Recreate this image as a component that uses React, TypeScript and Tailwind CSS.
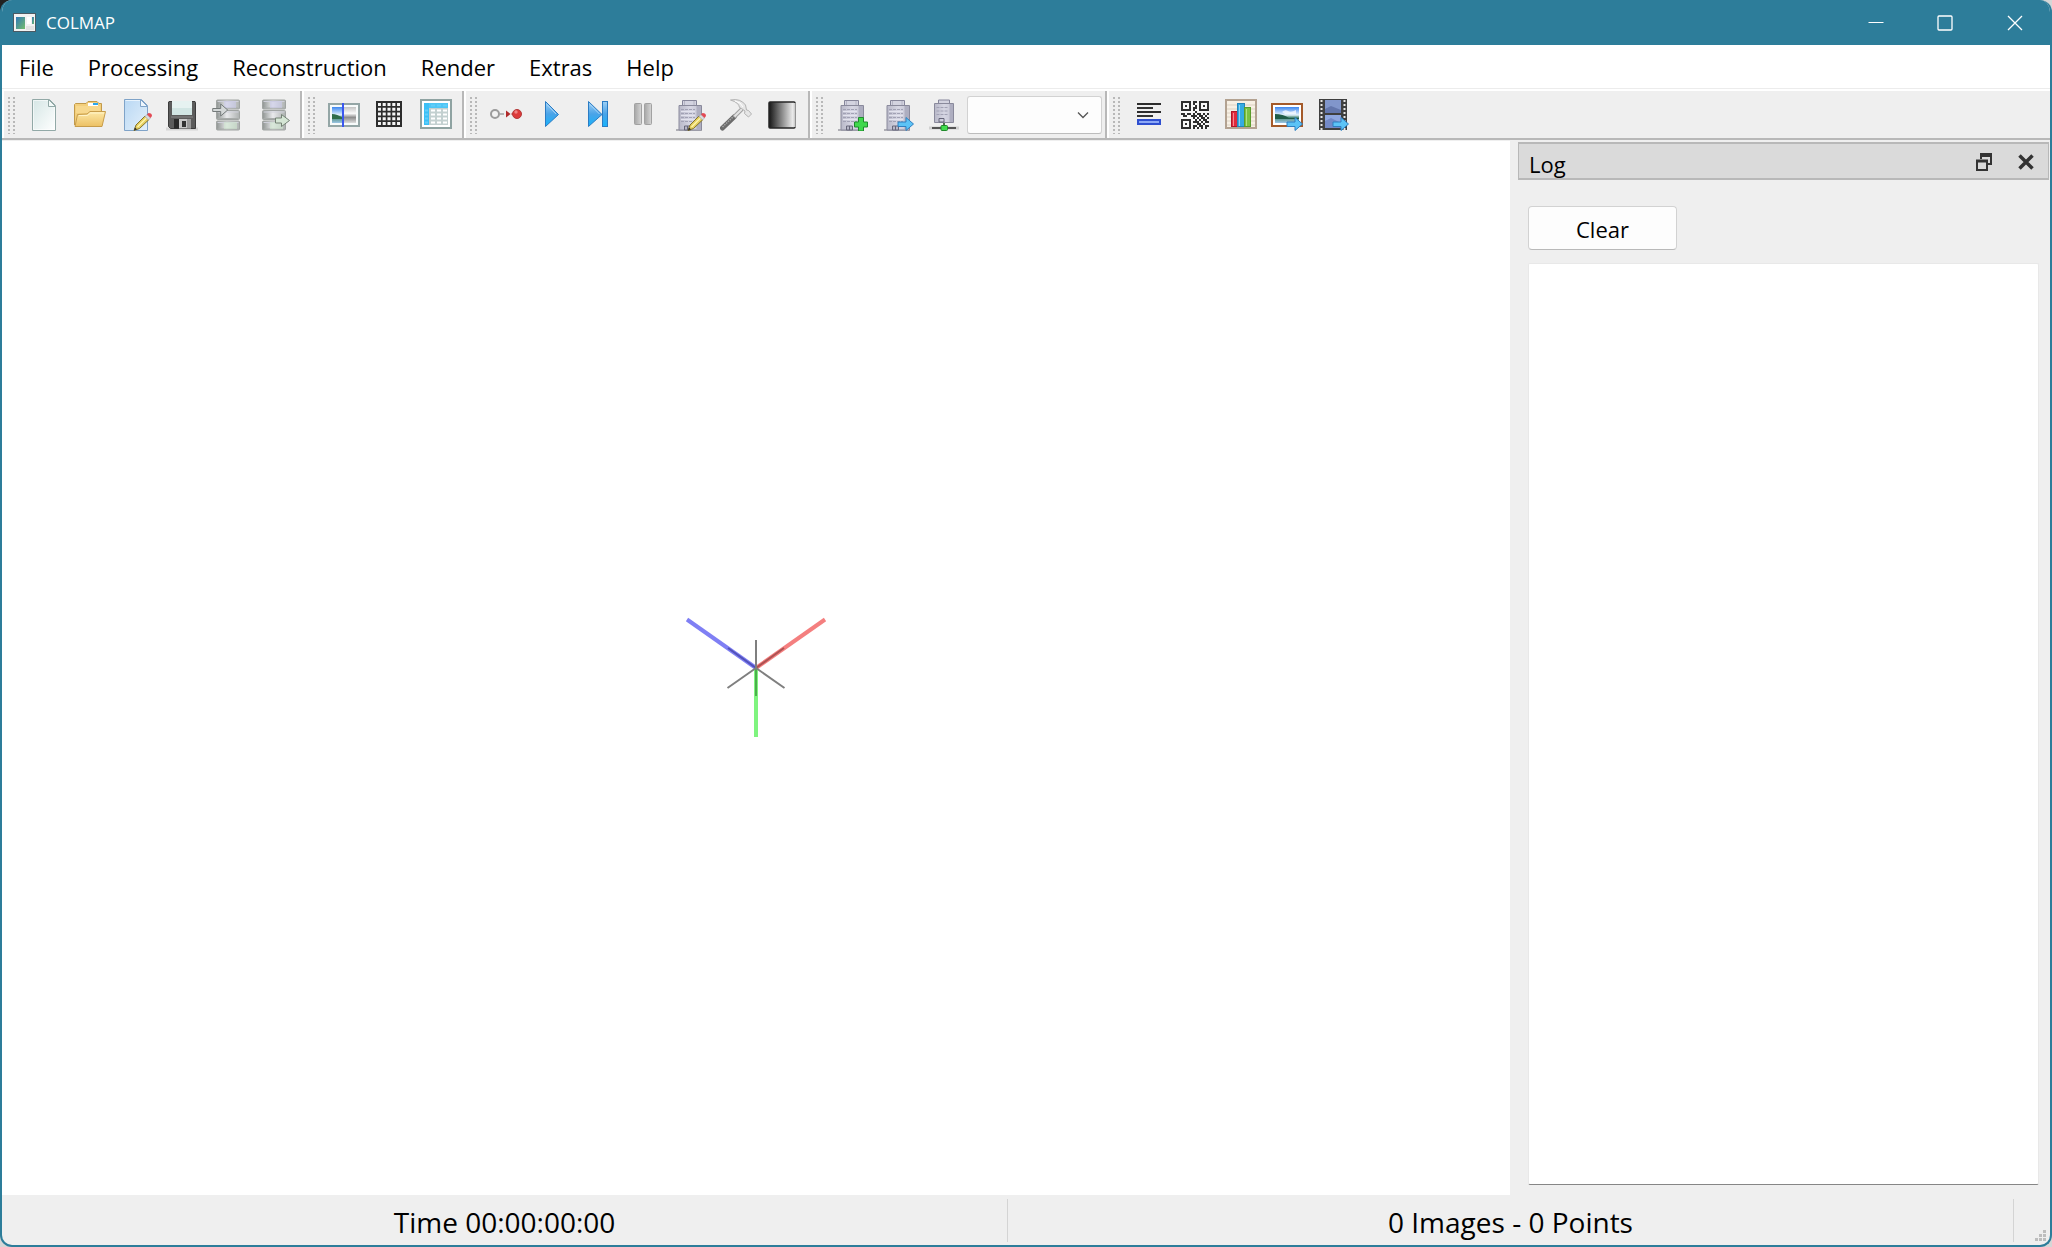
import React, { useState } from 'react';

const Gradients = () => (
  <svg className="absolute h-0 w-0" aria-hidden="true">
    <defs>
      <linearGradient id="page" x1="0" y1="0" x2="1" y2="1">
        <stop offset="0" stopColor="#d5e6e5" />
        <stop offset="1" stopColor="#ffffff" />
      </linearGradient>
      <linearGradient id="bluePage" x1="0" y1="0" x2="1" y2="1">
        <stop offset="0" stopColor="#b9d8f4" />
        <stop offset="1" stopColor="#e4f0fa" />
      </linearGradient>
      <linearGradient id="folder" x1="0" y1="0" x2="0" y2="1">
        <stop offset="0" stopColor="#fde9a9" />
        <stop offset="1" stopColor="#ecc063" />
      </linearGradient>
      <linearGradient id="disk" x1="0" y1="0" x2="1" y2="0">
        <stop offset="0" stopColor="#8f9492" />
        <stop offset="0.45" stopColor="#e9eaec" />
        <stop offset="1" stopColor="#adb1b0" />
      </linearGradient>
      <linearGradient id="play" x1="0" y1="0" x2="0" y2="1">
        <stop offset="0" stopColor="#9fd0f5" />
        <stop offset="0.5" stopColor="#4aa3e8" />
        <stop offset="1" stopColor="#16b3fb" />
      </linearGradient>
      <linearGradient id="sky" x1="0" y1="0" x2="0" y2="1">
        <stop offset="0" stopColor="#3b86f0" />
        <stop offset="0.5" stopColor="#e6f3fb" />
        <stop offset="0.65" stopColor="#4c8a78" />
        <stop offset="1" stopColor="#9cc6e6" />
      </linearGradient>
      <linearGradient id="graySky" x1="0" y1="0" x2="0" y2="1">
        <stop offset="0" stopColor="#c4c4c4" />
        <stop offset="0.4" stopColor="#fafafa" />
        <stop offset="0.65" stopColor="#8d8d8d" />
        <stop offset="1" stopColor="#dddddd" />
      </linearGradient>
      <linearGradient id="blackWhite" x1="0" y1="0" x2="1" y2="0">
        <stop offset="0" stopColor="#161616" />
        <stop offset="1" stopColor="#ffffff" />
      </linearGradient>
      <linearGradient id="wall" x1="0" y1="0" x2="1" y2="0">
        <stop offset="0" stopColor="#b8b8c8" />
        <stop offset="0.5" stopColor="#d6d6e3" />
        <stop offset="1" stopColor="#c3c3d2" />
      </linearGradient>
      <linearGradient id="pauseBar" x1="0" y1="0" x2="1" y2="0">
        <stop offset="0" stopColor="#a6a6a6" />
        <stop offset="1" stopColor="#d6d6d6" />
      </linearGradient>
      <linearGradient id="shot" x1="0" y1="0" x2="1" y2="1">
        <stop offset="0" stopColor="#2f78b8" />
        <stop offset="1" stopColor="#74bd6b" />
      </linearGradient>
    </defs>
  </svg>
);

const Icon = ({ children }: { children: React.ReactNode }) => (
  <svg viewBox="0 0 32 32" className="h-8 w-8" fill="none" aria-hidden="true">
    {children}
  </svg>
);

const Pencil = () => (
  <g>
    <path d="M14 31.5l2-5.5L25 17l4 3.500-9.500 9z" fill="#e6d060" stroke="#83722b" strokeWidth="1" />
    <path d="M17.500 28L26.500 19" stroke="#fff6b0" strokeWidth="1.200" />
    <path d="M25 17.500l2-2 3.500 3.500-2 2z" fill="#d9dde0" stroke="#9a9fa2" strokeWidth="0.600" />
    <path d="M27 15.500l1.500-1.500q3.500 0 3.500 3l-1.500 2z" fill="#e34a55" />
    <path d="M14 31.500l1-3 2 1.800z" fill="#2a2a2a" />
  </g>
);

const BlueArrow = () => (
  <path
    d="M16 23h8v-4.500l7.500 6.500-7.500 6.500V27.500h-8z"
    fill="#5cc3f6"
    stroke="#2f7fc0"
    strokeWidth="1"
    strokeLinejoin="round"
  />
);

const Building = () => (
  <g>
    <path d="M2 31h26" stroke="#9a9aa2" strokeWidth="1.500" />
    <path d="M8.500 7V1.500h14V7" fill="#d3d3e0" stroke="#85859a" />
    <path d="M10.500 2v5M20 2v5" stroke="#b4b4c4" />
    <path d="M5 31V6.500h22.500V31z" fill="url(#wall)" stroke="#8a8a9c" />
    <path d="M22.500 7v24H27V7z" fill="#aeaec0" />
    <path d="M7 10.500h14M7 14.500h14M7 18.500h14M7 22.500h14" stroke="#a2a2b5" strokeDasharray="3 1" />
    <path d="M7 12.500h14M7 16.500h14M7 20.500h14" stroke="#e3e3ee" />
    <path d="M10.500 31v-4h6v4z" fill="#b8b8c8" stroke="#66667a" />
    <path d="M13.500 27v4" stroke="#66667a" />
  </g>
);

const Disks = () => (
  <g>
    {[1, 11.5, 22].map((y) => (
      <g key={y}>
        <rect x="4.500" y={y} width="23" height="9" rx="1" fill="url(#disk)" stroke="#a0a4a2" />
        <path d={`M5.500 ${y + 1.500}h21`} stroke="#cfd0da" />
        <path d={`M5.500 ${y + 8}h21`} stroke="#a8acaa" />
      </g>
    ))}
    <rect x="12" y="2" width="12" height="7" fill="#cacaea" opacity="0.6" />
    <rect x="12" y="23" width="13" height="7" fill="#cfe6cf" opacity="0.6" />
  </g>
);

const NewIcon = () => (
  <Icon>
    <path d="M4.500.5h17l6 6v25h-23z" fill="url(#page)" stroke="#92a9a7" />
    <path d="M5.500 1.500h15l6 6v23h-21z" stroke="#ffffff" opacity="0.6" />
    <path d="M20.500.5v7h7z" fill="#f4faf9" stroke="#92a9a7" />
  </Icon>
);

const OpenIcon = () => (
  <Icon>
    <path d="M.5 26V5.500l1-1H12l2-2h9l2 2h2.500V13" fill="#f3cf7c" stroke="#c29a4b" />
    <path d="M14 4h10v3.500H14z" fill="#ffffff" />
    <path d="M19 4h5v2h-5z" fill="#2aa7ee" />
    <path d="M2 7h24v7H2z" fill="#f7d88e" />
    <path d="M1 27.500L3.500 15.500l9.500-.5 3-2.500h15.500l-3.500 15z" fill="url(#folder)" stroke="#c79c4a" strokeLinejoin="round" />
    <path d="M5 16.500h8.500l3-2.500H30" stroke="#fff3c8" />
  </Icon>
);

const EditIcon = () => (
  <Icon>
    <path d="M4.500.5h17l6 6v25h-23z" fill="url(#bluePage)" stroke="#7fa3c8" />
    <path d="M5.500 1.500h15" stroke="#e9f4fd" />
    <path d="M20.500.5v7h7z" fill="#eef6fd" stroke="#7fa3c8" />
    <Pencil />
  </Icon>
);

const SaveIcon = () => (
  <Icon>
    <path d="M0 30h32" stroke="#d6d6d6" strokeWidth="3" />
    <path d="M3 2.500h26l.5 1v26H4.500l-2-2V3z" fill="#5c5c5c" stroke="#3c3c3c" />
    <path d="M6 2h20v14H6z" fill="#e6f2f1" />
    <path d="M6 9h20v7H6z" fill="#d2e6e4" />
    <path d="M5 18h22" stroke="#888888" />
    <path d="M8 20h17v9.500H8z" fill="#2a2a2a" />
    <path d="M13 20h12v9.500H13z" fill="#c8c8c8" />
    <path d="M16 22h4v6h-4z" fill="#333333" />
    <path d="M21 20h4v9h-4z" fill="#9b9b9b" />
  </Icon>
);

const ImportIcon = () => (
  <Icon>
    <Disks />
    <path d="M.7 9.500h8V5l7 6-7 6v-4.500h-8z" fill="#d4d8d8" stroke="#747a7a" />
  </Icon>
);

const ExportIcon = () => (
  <Icon>
    <Disks />
    <path d="M17.500 19h6v-3.500l8 6-8 6V24h-6z" fill="#d5e6d5" stroke="#748275" />
  </Icon>
);

const MatchIcon = () => (
  <Icon>
    <rect x="1" y="5" width="30" height="22" fill="#f7fbfb" stroke="#94a6a6" strokeWidth="2" />
    <rect x="4" y="8" width="11" height="16" fill="url(#sky)" />
    <path d="M4 15q5 0 11 4v1H4z" fill="#2f6d4b" />
    <rect x="16" y="8" width="12" height="16" fill="url(#graySky)" />
    <path d="M15 4v24" stroke="#3b57ee" strokeWidth="2" />
  </Icon>
);

const GridIcon = () => (
  <Icon>
    <rect x="3" y="3" width="24" height="24" fill="#f6f6f6" stroke="#2d2d2d" strokeWidth="2" />
    <path
      d="M7.800 3v24M12.600 3v24M17.400 3v24M22.200 3v24M3 7.800h24M3 12.600h24M3 17.400h24M3 22.200h24"
      stroke="#2d2d2d"
      strokeWidth="1.700"
    />
  </Icon>
);

const TableIcon = () => (
  <Icon>
    <rect x="1" y="1" width="30" height="28" fill="#ffffff" stroke="#8fa3a2" strokeWidth="2" />
    <rect x="4" y="4" width="24" height="22" fill="#c3d0d0" />
    <path d="M4 4h24v5H4z" fill="#4fc6f5" />
    <path d="M4 4h5v22H4z" fill="#3bc0f6" />
    <path
      d="M11 11.500h4M17 11.500h4M23 11.500h4M11 15.500h4M17 15.500h4M23 15.500h4M11 19.500h4M17 19.500h4M23 19.500h4M11 23.500h4M17 23.500h4M23 23.500h4"
      stroke="#ffffff"
      strokeWidth="2"
    />
    <path d="M11 6.500h4M17 6.500h4M23 6.500h4M5 11.500h3M5 15.500h3M5 19.500h3M5 23.500h3" stroke="#62cefa" strokeWidth="2" />
  </Icon>
);

const RecordIcon = () => (
  <Icon>
    <circle cx="5" cy="15" r="4" fill="#f2f2f2" stroke="#9b9b9b" strokeWidth="2" />
    <path d="M10 15h4" stroke="#b5b5b5" strokeWidth="2" />
    <path d="M16 11.500l4.500 3.500-4.500 3.500z" fill="#b02a2a" />
    <path d="M21 15h2" stroke="#e0a0a0" strokeWidth="2" />
    <circle cx="27" cy="15" r="4.500" fill="#dd3b3b" stroke="#b23a3a" />
    <circle cx="26" cy="13" r="1.700" fill="#f08484" />
  </Icon>
);

const PlayIcon = () => (
  <Icon>
    <path d="M9.500 2.500l13 13-13 12z" fill="url(#play)" stroke="#2b7cc4" />
    <path d="M11 5.500l9 9.500" stroke="#c6e4fb" opacity="0.7" />
  </Icon>
);

const NextIcon = () => (
  <Icon>
    <path d="M6.500 2.500l13.500 13-13.500 12z" fill="url(#play)" stroke="#2b7cc4" />
    <path d="M8 5.500l9.500 9.500" stroke="#c6e4fb" opacity="0.7" />
    <rect x="20.500" y="2.500" width="5" height="25" fill="url(#play)" stroke="#2b7cc4" />
  </Icon>
);

const PauseIcon = () => (
  <Icon>
    <rect x="6.500" y="4.500" width="7" height="21" rx="1" fill="url(#pauseBar)" stroke="#a2a2a2" />
    <rect x="16.500" y="4.500" width="7" height="21" rx="1" fill="url(#pauseBar)" stroke="#a2a2a2" />
  </Icon>
);

const BuildingEditIcon = () => (
  <Icon>
    <Building />
    <Pencil />
  </Icon>
);

const HammerIcon = () => (
  <Icon>
    <path d="M2.500 29L14 18" stroke="#6c6c6c" strokeWidth="5" strokeLinecap="round" />
    <path d="M2.500 28L14 17" stroke="#a5a5a5" strokeWidth="1.500" strokeDasharray="1.500 1" />
    <path d="M14 18L22 10" stroke="#a0a0a0" strokeWidth="4" />
    <path d="M14.500 17.500L22 10" stroke="#e4e4e4" strokeWidth="2" />
    <path
      d="M10.500 1q10-2 15 5l1 5 2 .5 3 3.500-3 3-4-3.500.5-2.500-3.500-2.500-2-1q-.5-5-9-7.500z"
      fill="#e6e6e6"
      stroke="#b2b2b2"
    />
    <path d="M15 2q6 1 8 6" stroke="#ffffff" />
  </Icon>
);

const GradientIcon = () => (
  <Icon>
    <rect x="3" y="3" width="26" height="26" rx="1" fill="url(#blackWhite)" stroke="#262626" strokeWidth="1.500" />
    <path d="M28.500 4v24" stroke="#cfcfcf" strokeWidth="2" />
  </Icon>
);

const BuildingAddIcon = () => (
  <Icon>
    <Building />
    <path
      d="M22.500 18.500h5v4.500h4v5h-4v4h-5v-4h-4v-5h4z"
      fill="#3fd84c"
      stroke="#1f8a2c"
      strokeLinejoin="round"
    />
  </Icon>
);

const BuildingNextIcon = () => (
  <Icon>
    <Building />
    <BlueArrow />
  </Icon>
);

const BuildingNetIcon = () => (
  <Icon>
    <path d="M10.500 5V1h11v4" fill="#d3d3e0" stroke="#85859a" />
    <path d="M6.500 23.500V4.500h19v19z" fill="url(#wall)" stroke="#8a8a9c" />
    <path d="M21.500 5v18h3.500V5z" fill="#aeaec0" />
    <path d="M8.500 8.500h12M8.500 12h12M8.500 15.500h12" stroke="#a2a2b5" strokeDasharray="3 1" />
    <path d="M11 23v-3.500h5V23z" stroke="#66667a" />
    <path d="M16 24v4" stroke="#4f6f4f" strokeWidth="2" />
    <path d="M1 29h30" stroke="#8b8b8b" strokeWidth="3" opacity="0.3" />
    <path d="M4 29h24" stroke="#2b2b2b" strokeWidth="1.500" />
    <rect x="13" y="26.500" width="6.500" height="5" rx="1" fill="#40dc4d" stroke="#208a2b" />
  </Icon>
);

const LogIcon = () => (
  <Icon>
    <path d="M4 5h24M4 13h24" stroke="#2c2c2c" strokeWidth="2" />
    <path d="M4 9h16M4 17h16" stroke="#333333" strokeWidth="2" />
    <rect x="5" y="21" width="22" height="4" fill="#8ca8f6" stroke="#2f4fd0" strokeWidth="2" />
  </Icon>
);

// 14 x 14 modules, two pixels each
const qrRows = [
  '11111011011111',
  '10001010010001',
  '10101001010101',
  '10001011010001',
  '11111010011111',
  '00000001000000',
  '11011010110101',
  '01100111011010',
  '00000010101101',
  '11111001010110',
  '10001011101011',
  '10101000110100',
  '10001011011011',
  '11111010101010',
];

const QrIcon = () => (
  <Icon>
    <rect x="2" y="2" width="28" height="28" fill="#f7f7f7" />
    {qrRows.map((row, y) =>
      row.split('').map((cell, x) =>
        cell === '1' ? <rect key={`${x}-${y}`} x={2 + x * 2} y={2 + y * 2} width="2" height="2" fill="#2e2e2e" /> : null
      )
    )}
  </Icon>
);

const ChartIcon = () => (
  <Icon>
    <rect x="1" y="1" width="30" height="28" fill="#f7f0e4" stroke="#b3a291" strokeWidth="2" />
    <path d="M2 6h28M2 10h28M2 14h28M2 18h28M2 22h28M2 26h28" stroke="#ddd2c3" />
    <rect x="6.500" y="12.500" width="6" height="15" fill="#e02a3c" stroke="#b01828" />
    <path d="M8.500 14v13" stroke="#f58590" />
    <rect x="12.500" y="4.500" width="7" height="23" fill="#35abe2" stroke="#2385ba" />
    <path d="M14.500 6v21" stroke="#8bd4f5" />
    <rect x="19.500" y="8.500" width="6" height="19" fill="#7ac143" stroke="#5a9c2c" />
    <path d="M21.500 10v17" stroke="#b0e184" />
  </Icon>
);

const ImageIcon = () => (
  <Icon>
    <rect x="1" y="5" width="30" height="22" fill="#ffffff" stroke="#a45a2a" strokeWidth="2" />
    <rect x="4" y="8" width="24" height="16" fill="url(#sky)" />
    <path d="M4 15q8 0 14 4h10v1H4z" fill="#1f5c49" />
    <path d="M11 13q3-3 6-1t8-1v4H14z" fill="#ffffff" opacity="0.7" />
    <BlueArrow />
  </Icon>
);

const FilmIcon = () => (
  <Icon>
    <rect x="2" y="0" width="28" height="31" fill="#3f3f3f" />
    <rect x="8" y="1" width="16" height="13" fill="#8196cb" />
    <path d="M8 10l6-3 10 4v3H8z" fill="#6376ac" />
    <rect x="8" y="16" width="16" height="13" fill="#8ea6df" />
    <path d="M8 22l6-3 10 5v5H8z" fill="#7389c6" />
    <path d="M4.500 1v30M27.500 1v30" stroke="#e8e8e8" strokeWidth="2" strokeDasharray="2 2" />
    <BlueArrow />
  </Icon>
);

const menus = ['File', 'Processing', 'Reconstruction', 'Render', 'Extras', 'Help'];

const fileTools = [
  { name: 'New project', icon: NewIcon },
  { name: 'Open project', icon: OpenIcon },
  { name: 'Edit project', icon: EditIcon },
  { name: 'Save project', icon: SaveIcon },
  { name: 'Import model', icon: ImportIcon },
  { name: 'Export model', icon: ExportIcon },
];

const processingTools = [
  { name: 'Feature extraction', icon: MatchIcon },
  { name: 'Feature matching', icon: GridIcon },
  { name: 'Database management', icon: TableIcon },
];

const reconstructionTools = [
  { name: 'Automatic reconstruction', icon: RecordIcon },
  { name: 'Start reconstruction', icon: PlayIcon },
  { name: 'Reconstruct next image', icon: NextIcon },
  { name: 'Pause reconstruction', icon: PauseIcon },
  { name: 'Reconstruction options', icon: BuildingEditIcon },
  { name: 'Bundle adjustment', icon: HammerIcon },
  { name: 'Dense reconstruction', icon: GradientIcon },
];

const renderTools = [
  { name: 'Render', icon: BuildingAddIcon },
  { name: 'Render now', icon: BuildingNextIcon },
  { name: 'Render options', icon: BuildingNetIcon },
];

const extraTools = [
  { name: 'Show log', icon: LogIcon },
  { name: 'Match matrix', icon: QrIcon },
  { name: 'Show model statistics', icon: ChartIcon },
  { name: 'Grab image', icon: ImageIcon },
  { name: 'Grab movie', icon: FilmIcon },
];

const ToolGroup = ({ tools, last, children }: any) => (
  <div
    className={
      last
        ? 'flex flex-1 items-center border-l-2 border-white pr-1'
        : 'flex items-center border-l-2 border-l-white border-r-2 border-r-[#b8b8b8] pr-[3px]'
    }
  >
    <div className="ml-1 mr-[5px] h-[38px] w-2 bg-[radial-gradient(circle_at_1px_2px,#b8b8b8_1px,transparent_1px)] bg-size-[5px_4px]" />
    {tools.map(({ name, icon: ToolIcon }: any) => (
      <button key={name} type="button" aria-label={name} className="flex w-[46px] justify-center hover:bg-gray-200">
        <ToolIcon />
      </button>
    ))}
    {children}
  </div>
);

const App = () => {
  const [log, setLog] = useState('');

  return (
    <div className="h-screen bg-linear-to-br from-[#222222] from-1% to-[#d6d6d6] to-2% font-['Open_Sans','Noto_Sans',sans-serif] text-[22px] leading-7 text-black">
      <Gradients />
      <div className="flex h-full flex-col overflow-hidden rounded-xl border-2 border-t-0 border-[#2d7d9a] bg-[#efefef]">
        <header className="flex h-[45px] shrink-0 items-center bg-[#2d7d9a] pl-[11px] text-white">
          <svg viewBox="0 0 23 19" className="h-[19px] w-[23px]" aria-hidden="true">
            <rect x="0.500" y="0.500" width="22" height="18" fill="#f2f2f2" stroke="#4b5a63" />
            <rect x="3" y="4" width="9" height="12" fill="url(#shot)" />
            <rect x="14" y="4" width="4" height="7" fill="#ffffff" />
            <rect x="19" y="4" width="2" height="7" fill="url(#shot)" />
            <rect x="13" y="13" width="8" height="4" fill="#e2e2e2" />
          </svg>
          <h1 className="ml-[10px] flex-1 text-[17px]">COLMAP</h1>
          <button type="button" aria-label="Minimize" className="flex h-full w-[69px] items-center justify-center">
            <svg viewBox="0 0 16 16" className="h-4 w-4" fill="none" stroke="#ffffff" aria-hidden="true">
              <path d="M0.500 7.500h15" />
            </svg>
          </button>
          <button type="button" aria-label="Maximize" className="flex h-full w-[70px] items-center justify-center">
            <svg viewBox="0 0 16 16" className="h-4 w-4" fill="none" stroke="#ffffff" strokeWidth="1.300" aria-hidden="true">
              <rect x="1" y="1" width="14" height="14" rx="1" />
            </svg>
          </button>
          <button type="button" aria-label="Close" className="flex h-full w-[70px] items-center justify-center">
            <svg viewBox="0 0 16 16" className="h-4 w-4" fill="none" stroke="#ffffff" strokeWidth="1.300" aria-hidden="true">
              <path d="M1 1l14 14M15 1L1 15" />
            </svg>
          </button>
        </header>

        <nav className="flex h-11 shrink-0 items-center border-b border-[#ececec] bg-white">
          {menus.map((menu) => (
            <button key={menu} type="button" className="h-full px-[17px] hover:bg-gray-100">
              {menu}
            </button>
          ))}
        </nav>

        <div className="flex h-[51px] shrink-0 items-stretch border-y-2 border-t-white border-b-[#b8b8b8]">
          <ToolGroup tools={fileTools} />
          <ToolGroup tools={processingTools} />
          <ToolGroup tools={reconstructionTools} />
          <ToolGroup tools={renderTools}>
            <div className="relative h-[38px] w-[135px]">
              <select
                aria-label="Model"
                className="h-full w-full appearance-none rounded-[3px] border border-[#d2d2d2] border-b-[#bdbdbd] bg-[#fdfdfd]"
              />
              <svg
                viewBox="0 0 12 8"
                className="pointer-events-none absolute right-[13px] top-[15px] h-2 w-3"
                fill="none"
                stroke="#555555"
                strokeWidth="1.300"
                aria-hidden="true"
              >
                <path d="M1 1.500l5 5 5-5" />
              </svg>
            </div>
          </ToolGroup>
          <ToolGroup tools={extraTools} last />
        </div>

        <main className="flex min-h-0 flex-1 pt-px">
          <section aria-label="Model viewer" className="flex min-w-0 flex-1 items-center justify-center bg-white">
            {/* coordinate axes, with the small grey cross on top */}
            <svg viewBox="-80 -80 160 160" className="h-40 w-40" fill="none" aria-hidden="true">
              <path d="M0 0L69 -48.500" stroke="#f47f7f" strokeWidth="4" />
              <path d="M0 0L-69 -48.500" stroke="#7f7ff4" strokeWidth="4" />
              <path d="M0 0V69" stroke="#7ff47f" strokeWidth="4" />
              <path d="M0 0L28 -20" stroke="#8f3f3f" strokeWidth="2" opacity="0.7" />
              <path d="M0 0L-28 -20" stroke="#3f3f9f" strokeWidth="2" opacity="0.7" />
              <path d="M0 0V28" stroke="#3f9f3f" strokeWidth="2" opacity="0.8" />
              <path d="M0 0V-28M0 0L28.500 20M0 0L-28.500 20" stroke="#7f7f7f" strokeWidth="2" />
            </svg>
          </section>

          <aside className="ml-2 mr-px flex w-[531px] shrink-0 flex-col pt-px">
            <div className="flex h-[38px] items-center border border-y-2 border-[#b8b8b8] bg-[#dadada] pl-[10px] pr-px pt-[2px]">
              <h2 className="flex-1 pt-1">Log</h2>
              <button type="button" aria-label="Float" className="flex w-[42px] justify-center">
                <svg viewBox="0 0 16 18" className="h-[18px] w-4" fill="none" stroke="#333333" strokeWidth="2" aria-hidden="true">
                  <path d="M5 6V2h10v9h-4" />
                  <path d="M4 2h12" strokeWidth="4" />
                  <path d="M1 8h10v9H1z" />
                  <path d="M0 8h12" strokeWidth="3" />
                </svg>
              </button>
              <button type="button" aria-label="Close log" className="flex w-[42px] justify-center">
                <svg viewBox="0 0 16 16" className="h-4 w-4" stroke="#333333" strokeWidth="3.500" aria-hidden="true">
                  <path d="M1.500 1.500l13 13M14.500 1.500l-13 13" />
                </svg>
              </button>
            </div>
            <div className="flex min-h-0 flex-1 flex-col px-[10px] pb-[10px] pt-[26px]">
              <button
                type="button"
                onClick={() => setLog('')}
                className="h-11 w-[149px] rounded border border-[#d2d2d2] border-b-[#b9b9b9] bg-[#fdfdfd] pt-px hover:bg-gray-50"
              >
                Clear
              </button>
              <textarea
                aria-label="Log output"
                readOnly
                value={log}
                className="mt-[13px] w-full flex-1 resize-none rounded-[2px] border border-[#e8e8e8] border-b-[#868686] bg-white outline-none"
              />
            </div>
          </aside>
        </main>

        <footer className="flex h-[50px] shrink-0 items-stretch pb-[3px] pt-1 text-[28px] leading-[42px]">
          <div className="flex flex-1 items-center justify-center border-r border-[#d4d4d4] pt-[2px]">Time 00:00:00:00</div>
          <div className="flex flex-1 items-center justify-center border-r border-[#d4d4d4] pt-[2px]">0 Images - 0 Points</div>
          <div className="flex w-9 items-end justify-end pr-[3px]">
            <svg viewBox="0 0 12 12" className="h-3 w-3" fill="#bdbdbd" aria-hidden="true">
              <path d="M8 0h3v3H8zM4 4h3v3H4zM8 4h3v3H8zM0 8h3v3H0zM4 8h3v3H4zM8 8h3v3H8z" />
            </svg>
          </div>
        </footer>
      </div>
    </div>
  );
};

export default App;
